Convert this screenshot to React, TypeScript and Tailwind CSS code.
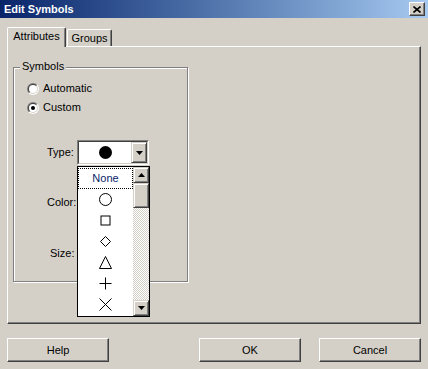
import React from "react";

const raised =
  "border border-t-white border-l-white border-r-[#404040] border-b-[#404040] shadow-[inset_-1px_-1px_0_#808080]";

const scrollBtn =
  "border border-t-[#d4d0c8] border-l-[#d4d0c8] border-r-[#404040] border-b-[#404040] shadow-[inset_1px_1px_0_#ffffff,inset_-1px_-1px_0_#808080] bg-[#d4d0c8]";

function Radio({ checked, id }: { checked?: boolean; id: string }) {
  return (
    <svg width="12" height="12" viewBox="0 0 12 12">
      <defs>
        <linearGradient id={id + "o"} x1="0" y1="0" x2="1" y2="1">
          <stop offset="0.5" stopColor="#808080" />
          <stop offset="0.5" stopColor="#ffffff" />
        </linearGradient>
        <linearGradient id={id + "i"} x1="0" y1="0" x2="1" y2="1">
          <stop offset="0.5" stopColor="#404040" />
          <stop offset="0.5" stopColor="#d4d0c8" />
        </linearGradient>
      </defs>
      <circle cx="6" cy="6" r="6" fill={`url(#${id}o)`} />
      <circle cx="6" cy="6" r="5" fill={`url(#${id}i)`} />
      <circle cx="6" cy="6" r="4" fill="#ffffff" />
      {checked && <circle cx="6" cy="6" r="2" fill="#000000" />}
    </svg>
  );
}

function Arrow({ up }: { up?: boolean }) {
  return (
    <svg width="7" height="4" viewBox="0 0 7 4">
      {up ? (
        <polygon points="3.5,0 7,4 0,4" fill="#000" />
      ) : (
        <polygon points="0,0 7,0 3.5,4" fill="#000" />
      )}
    </svg>
  );
}

function Symbol({ kind }: { kind: string }) {
  return (
    <svg width="15" height="15" viewBox="0 0 15 15" fill="none" stroke="#000" strokeWidth="1">
      {kind === "circle" && <circle cx="7.5" cy="7.5" r="6" />}
      {kind === "square" && <rect x="3" y="3" width="9" height="9" />}
      {kind === "diamond" && <polygon points="7.5,2.5 12.5,7.5 7.5,12.5 2.5,7.5" />}
      {kind === "triangle" && <polygon points="7.5,1.5 13.5,13.5 1.5,13.5" />}
      {kind === "plus" && <path d="M7.5 1.5V13.5M1.5 7.5H13.5" />}
      {kind === "x" && <path d="M1.5 1.5L13.5 13.5M13.5 1.5L1.5 13.5" />}
    </svg>
  );
}

export default function App() {
  const symbols = ["circle", "square", "diamond", "triangle", "plus", "x"];

  return (
    <div className="w-[428px] h-[369px] overflow-hidden bg-[#d4d0c8] text-[11px] text-black font-['Liberation_Sans',Arial,sans-serif]">
      {/* title bar */}
      <div className="h-[18px] flex items-center justify-between pl-[4px] pr-[3px] bg-linear-to-r from-[#0a246a] to-[#a6caf0]">
        <span className="text-white font-bold text-[11px]">Edit Symbols</span>
        <div className={`w-[16px] h-[14px] bg-[#d4d0c8] flex items-center justify-center ${raised}`}>
          <svg width="8" height="7" viewBox="0 0 8 7">
            <path d="M0.5 0.5L7.5 6.5M7.5 0.5L0.5 6.5" stroke="#000" strokeWidth="1.6" />
          </svg>
        </div>
      </div>

      {/* tabs */}
      <div className="flex items-end h-[19px] mt-[9px] pl-[7px]">
        <div className="relative z-10 h-[20px] -mb-px w-[59px] bg-[#d4d0c8] border-t border-l border-r border-t-white border-l-white border-r-[#404040] shadow-[inset_-1px_0_0_#808080] rounded-t-[2px] flex items-center justify-center pb-[2px]">
          Attributes
        </div>
        <div className="h-[17px] w-[45px] ml-px border-t border-l border-r border-t-white border-l-white border-r-[#404040] shadow-[inset_-1px_0_0_#808080] rounded-t-[2px] flex items-center justify-center">
          Groups
        </div>
      </div>

      {/* tab panel */}
      <div className="ml-[7px] w-[414px] h-[278px] border border-t-white border-l-white border-r-[#404040] border-b-[#404040] shadow-[inset_-1px_-1px_0_#808080]">
        <div className="relative ml-[5px] mt-[20px] w-[175px] h-[215px] border border-[#808080] shadow-[1px_1px_0_#ffffff,inset_1px_1px_0_#ffffff]">
          <span className="absolute left-[6px] -top-[8px] px-[2px] leading-[13px] bg-[#d4d0c8]">
            Symbols
          </span>

          <div className="pt-[11px] flex flex-col">
            <div className="h-[19px] flex items-center pl-[13px] gap-[4px]">
              <Radio id="ra" />
              <span>Automatic</span>
            </div>
            <div className="h-[19px] flex items-center pl-[13px] gap-[4px]">
              <Radio id="rc" checked />
              <span>Custom</span>
            </div>

            <div className="mt-[23px] h-[25px] flex items-center pl-[33px]">
              <span className="w-[30px]">Type:</span>
              <div className="relative w-[72px] h-[25px] border border-t-[#808080] border-l-[#808080] border-r-white border-b-white">
                <div className="h-full flex border border-t-[#404040] border-l-[#404040] border-r-[#d4d0c8] border-b-[#d4d0c8]">
                  <div className="flex-1 bg-white flex items-center justify-center">
                    <div className="w-[13px] h-[13px] rounded-full bg-black" />
                  </div>
                  <div className={`w-[16px] flex items-center justify-center ${scrollBtn}`}>
                    <Arrow />
                  </div>
                </div>

                {/* open dropdown list */}
                <div className="absolute z-20 top-[25px] -left-px w-[73px] h-[151px] border border-black bg-white flex">
                  <div className="w-[55px] pt-[1px] flex flex-col">
                    <div className="h-[21px] border border-dotted border-black flex items-center justify-center text-[#0a246a]">
                      None
                    </div>
                    {symbols.map((s) => (
                      <div key={s} className="h-[21px] flex items-center justify-center">
                        <Symbol kind={s} />
                      </div>
                    ))}
                  </div>
                  <div className="w-[16px] flex flex-col">
                    <div className={`h-[16px] flex items-center justify-center ${scrollBtn}`}>
                      <Arrow up />
                    </div>
                    <div className={`h-[25px] ${scrollBtn}`} />
                    <div className="flex-1 bg-[repeating-conic-gradient(#d4d0c8_0%_25%,#ffffff_0%_50%)] bg-[length:2px_2px]" />
                    <div className={`h-[16px] flex items-center justify-center ${scrollBtn}`}>
                      <Arrow />
                    </div>
                  </div>
                </div>
              </div>
            </div>

            <div className="mt-[31px] h-[13px] leading-[13px] pl-[33px]">Color:</div>
            <div className="mt-[38px] h-[13px] leading-[13px] pl-[36px]">Size:</div>
          </div>
        </div>
      </div>

      {/* buttons */}
      <div className="mt-[14px] flex pl-[7px]">
        <div className={`w-[102px] h-[24px] flex items-center justify-center ${raised}`}>Help</div>
        <div className={`ml-[90px] w-[102px] h-[24px] flex items-center justify-center ${raised}`}>OK</div>
        <div className={`ml-[18px] w-[102px] h-[24px] flex items-center justify-center ${raised}`}>Cancel</div>
      </div>
    </div>
  );
}
